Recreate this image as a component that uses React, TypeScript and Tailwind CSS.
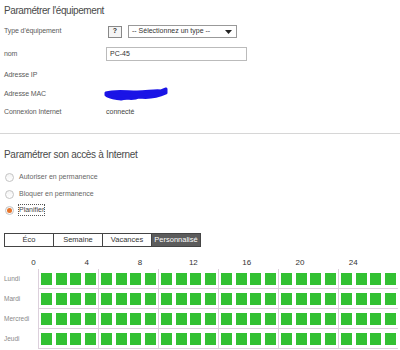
const FONT = { fontFamily: '"Liberation Sans", Arial, sans-serif' };

const TABS = ['Éco', 'Semaine', 'Vacances', 'Personnalisé'];
const DAYS = ['Lundi', 'Mardi', 'Mercredi', 'Jeudi'];
const HOURS = [0, 4, 8, 12, 16, 20, 24];

function Radio({ checked }: { checked?: boolean }) {
  return (
    <span className="flex h-[9px] w-[9px] items-center justify-center rounded-full border border-[#c4c4c4] bg-gradient-to-b from-[#f4f4f4] to-white">
      {checked && <span className="h-[5px] w-[5px] rounded-full bg-[#e8742a]" />}
    </span>
  );
}

function Row({ label, h, mt, children }: { label: string; h: string; mt: string; children?: React.ReactNode }) {
  return (
    <div className={`flex items-center ${h} ${mt}`}>
      <div className="w-[102px] shrink-0 text-[7px] tracking-[-0.1px] text-[#5a5a5a]">{label}</div>
      <div className="flex items-center">{children}</div>
    </div>
  );
}

export default function App() {
  return (
    <div className="h-[350px] w-[400px] overflow-hidden bg-white" style={FONT}>
      <div className="pl-[4px]">
        <div className="pt-[4px] text-[10px] leading-[14px] tracking-[-0.4px] text-[#4a4a4a]">Paramétrer l'équipement</div>

        <Row label="Type d'équipement" h="h-[13px]" mt="mt-[7px]">
          <span className="ml-[2px] flex h-[12px] w-[14px] items-center justify-center border border-[#888] bg-[#f4f4f4] text-[7px] font-bold text-[#333]">?</span>
          <span className="ml-[6px] flex h-[13px] w-[109px] items-center justify-between border border-[#999] bg-white pl-[3px] pr-[4px] text-[7px] text-[#333]">
            -- Sélectionnez un type --
            <svg width="7" height="4" viewBox="0 0 7 4"><path d="M0 0h7L3.5 4z" fill="#222" /></svg>
          </span>
        </Row>

        <Row label="nom" h="h-[14px]" mt="mt-[9px]">
          <span className="flex h-[14px] w-[141px] items-center border border-[#bbb] bg-white pl-[3px] text-[7px] text-[#333]">PC-45</span>
        </Row>

        <Row label="Adresse IP" h="h-[14px]" mt="mt-[7px]" />

        <Row label="Adresse MAC" h="h-[14px]" mt="mt-[5px]">
          <svg width="66" height="14" viewBox="0 0 66 14" className="-ml-[3px]">
            <path
              d="M3 6 C12 3, 24 5, 34 5 S52 3, 58 4 L63 2 L63 6 C54 10, 44 11, 36 10 C30 13, 24 10, 18 12 C12 11, 6 11, 3 8 Z"
              fill="#1a14e6"
              stroke="#1a14e6"
              strokeWidth="3"
              strokeLinejoin="round"
            />
          </svg>
        </Row>

        <Row label="Connexion Internet" h="h-[15px]" mt="mt-[4px]">
          <span className="text-[7px] text-[#444]">connecté</span>
        </Row>
      </div>

      <div className="mt-[13px] border-t border-[#d6d6d6]" />

      <div className="pl-[4px]">
        <div className="mt-[14px] text-[10px] leading-[14px] tracking-[-0.3px] text-[#4a4a4a]">Paramétrer son accès à Internet</div>

        <div className="mt-[9px] flex h-[12px] items-center gap-[5px] pl-[1px] text-[7px] text-[#666]">
          <Radio />
          Autoriser en permanence
        </div>
        <div className="mt-[5px] flex h-[12px] items-center gap-[5px] pl-[1px] text-[7px] text-[#666]">
          <Radio />
          Bloquer en permanence
        </div>
        <div className="mt-[4px] flex h-[12px] items-center gap-[5px] pl-[1px] text-[7px] text-[#444]">
          <Radio checked />
          <span className="outline-1 outline-dotted outline-[#555]">Planifier</span>
        </div>

        <div className="mt-[17px] flex h-[14px] w-[197px]">
          {TABS.map((t, i) => (
            <div
              key={t}
              className={`flex flex-1 items-center justify-center border border-[#444] text-[7.5px] ${
                i > 0 ? '-ml-px' : ''
              } ${i === TABS.length - 1 ? 'bg-[#5c5c5c] text-white' : 'bg-white text-[#333]'}`}
            >
              {t}
            </div>
          ))}
        </div>
      </div>

      <div className="mt-[10px] flex h-[12px] items-center pl-[6.7px] text-[8px] text-[#333]">
        {HOURS.map((h) => (
          <span key={h} className="w-[53.33px] shrink-0 text-center">{h}</span>
        ))}
      </div>

      <div>
        {DAYS.map((d) => (
          <div key={d} className="flex h-[20px]">
            <div className="flex w-[38px] shrink-0 items-center pl-[4px] text-[6.5px] text-[#888]">{d}</div>
            {[0, 1, 2, 3, 4, 5].map((g) => (
              <div key={g} className="flex w-[60px] shrink-0 border-b border-l border-[#dcd0dc]">
                {[0, 1, 2, 3].map((c) => (
                  <div key={c} className="flex w-[15px] items-center justify-center">
                    <span className="h-[12px] w-[11px] bg-[#33c133]" />
                  </div>
                ))}
              </div>
            ))}
          </div>
        ))}
      </div>
    </div>
  );
}
